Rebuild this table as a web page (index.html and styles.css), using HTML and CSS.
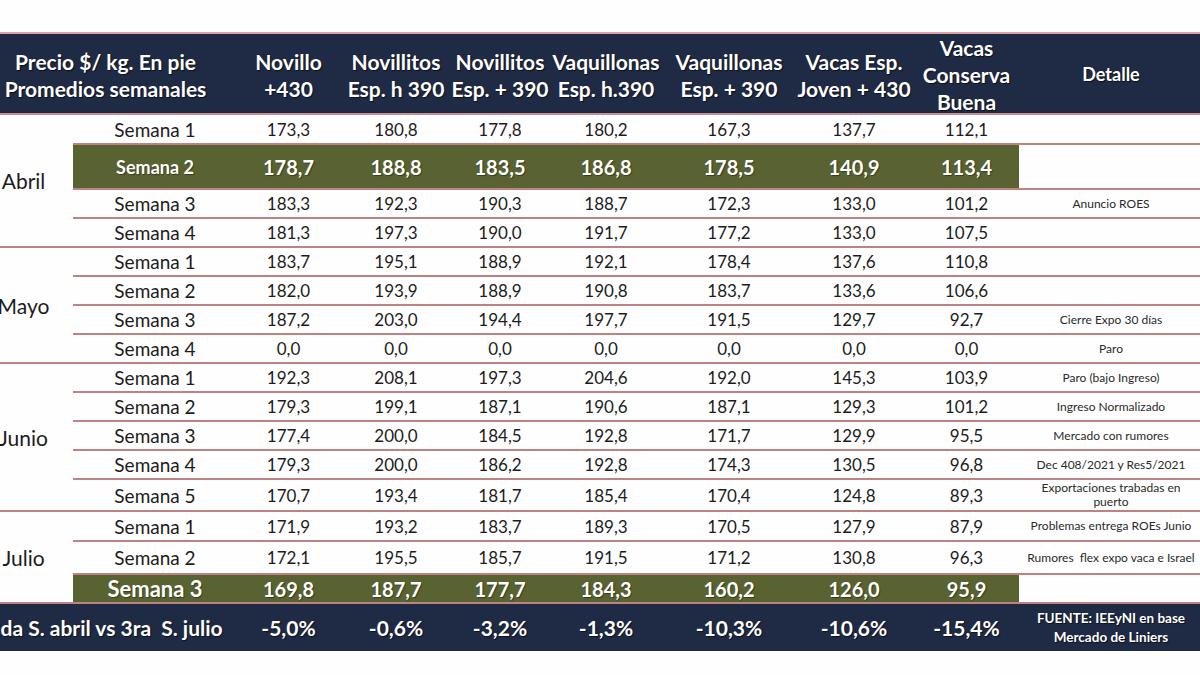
FILE: index.html
```html
<!DOCTYPE html>
<html lang="es">
<head>
<meta charset="utf-8">
<title>Precio $/kg en pie</title>
<link rel="stylesheet" href="styles.css">
</head>
<body>
<div class="sheet">
  <div class="head">
    <div class="h h-title">Precio $/ kg. En pie<br>Promedios semanales</div>
    <div class="h">Novillo<br>+430</div>
    <div class="h">Novillitos<br>Esp. h 390</div>
    <div class="h">Novillitos<br>Esp. + 390</div>
    <div class="h">Vaquillonas<br>Esp. h.390</div>
    <div class="h">Vaquillonas<br>Esp. + 390</div>
    <div class="h">Vacas Esp.<br>Joven + 430</div>
    <div class="h">Vacas<br>Conserva<br>Buena</div>
    <div class="h h-det">Detalle</div>
  </div>

  <div class="group">
    <div class="month">Abril</div>
    <div class="weeks">
      <div class="row r30"><div class="c wk">Semana 1</div><div class="c">173,3</div><div class="c">180,8</div><div class="c">177,8</div><div class="c">180,2</div><div class="c">167,3</div><div class="c">137,7</div><div class="c">112,1</div><div class="c det"></div></div>
      <div class="row hl r45"><div class="c wk">Semana 2</div><div class="c">178,7</div><div class="c">188,8</div><div class="c">183,5</div><div class="c">186,8</div><div class="c">178,5</div><div class="c">140,9</div><div class="c">113,4</div><div class="c det"></div></div>
      <div class="row r29"><div class="c wk">Semana 3</div><div class="c">183,3</div><div class="c">192,3</div><div class="c">190,3</div><div class="c">188,7</div><div class="c">172,3</div><div class="c">133,0</div><div class="c">101,2</div><div class="c det">Anuncio ROES</div></div>
      <div class="row r29"><div class="c wk">Semana 4</div><div class="c">181,3</div><div class="c">197,3</div><div class="c">190,0</div><div class="c">191,7</div><div class="c">177,2</div><div class="c">133,0</div><div class="c">107,5</div><div class="c det"></div></div>
    </div>
  </div>

  <div class="group">
    <div class="month">Mayo</div>
    <div class="weeks">
      <div class="row r29"><div class="c wk">Semana 1</div><div class="c">183,7</div><div class="c">195,1</div><div class="c">188,9</div><div class="c">192,1</div><div class="c">178,4</div><div class="c">137,6</div><div class="c">110,8</div><div class="c det"></div></div>
      <div class="row r29"><div class="c wk">Semana 2</div><div class="c">182,0</div><div class="c">193,9</div><div class="c">188,9</div><div class="c">190,8</div><div class="c">183,7</div><div class="c">133,6</div><div class="c">106,6</div><div class="c det"></div></div>
      <div class="row r29"><div class="c wk">Semana 3</div><div class="c">187,2</div><div class="c">203,0</div><div class="c">194,4</div><div class="c">197,7</div><div class="c">191,5</div><div class="c">129,7</div><div class="c">92,7</div><div class="c det">Cierre Expo 30 días</div></div>
      <div class="row r29"><div class="c wk">Semana 4</div><div class="c">0,0</div><div class="c">0,0</div><div class="c">0,0</div><div class="c">0,0</div><div class="c">0,0</div><div class="c">0,0</div><div class="c">0,0</div><div class="c det">Paro</div></div>
    </div>
  </div>

  <div class="group">
    <div class="month">Junio</div>
    <div class="weeks">
      <div class="row r29"><div class="c wk">Semana 1</div><div class="c">192,3</div><div class="c">208,1</div><div class="c">197,3</div><div class="c">204,6</div><div class="c">192,0</div><div class="c">145,3</div><div class="c">103,9</div><div class="c det">Paro (bajo Ingreso)</div></div>
      <div class="row r29"><div class="c wk">Semana 2</div><div class="c">179,3</div><div class="c">199,1</div><div class="c">187,1</div><div class="c">190,6</div><div class="c">187,1</div><div class="c">129,3</div><div class="c">101,2</div><div class="c det">Ingreso Normalizado</div></div>
      <div class="row r29"><div class="c wk">Semana 3</div><div class="c">177,4</div><div class="c">200,0</div><div class="c">184,5</div><div class="c">192,8</div><div class="c">171,7</div><div class="c">129,9</div><div class="c">95,5</div><div class="c det">Mercado con rumores</div></div>
      <div class="row r29"><div class="c wk">Semana 4</div><div class="c">179,3</div><div class="c">200,0</div><div class="c">186,2</div><div class="c">192,8</div><div class="c">174,3</div><div class="c">130,5</div><div class="c">96,8</div><div class="c det">Dec 408/2021 y Res5/2021</div></div>
      <div class="row r32"><div class="c wk">Semana 5</div><div class="c">170,7</div><div class="c">193,4</div><div class="c">181,7</div><div class="c">185,4</div><div class="c">170,4</div><div class="c">124,8</div><div class="c">89,3</div><div class="c det">Exportaciones trabadas en<br>puerto</div></div>
    </div>
  </div>

  <div class="group">
    <div class="month">Julio</div>
    <div class="weeks">
      <div class="row r30"><div class="c wk">Semana 1</div><div class="c">171,9</div><div class="c">193,2</div><div class="c">183,7</div><div class="c">189,3</div><div class="c">170,5</div><div class="c">127,9</div><div class="c">87,9</div><div class="c det">Problemas entrega ROEs Junio</div></div>
      <div class="row r33"><div class="c wk">Semana 2</div><div class="c">172,1</div><div class="c">195,5</div><div class="c">185,7</div><div class="c">191,5</div><div class="c">171,2</div><div class="c">130,8</div><div class="c">96,3</div><div class="c det">Rumores&nbsp; flex expo vaca e Israel</div></div>
      <div class="row hl hl2 r29"><div class="c wk">Semana 3</div><div class="c">169,8</div><div class="c">187,7</div><div class="c">177,7</div><div class="c">184,3</div><div class="c">160,2</div><div class="c">126,0</div><div class="c">95,9</div><div class="c det"></div></div>
    </div>
  </div>

  <div class="foot">
    <div class="f f-title">2da S. abril vs 3ra&nbsp; S. julio</div>
    <div class="f">-5,0%</div>
    <div class="f">-0,6%</div>
    <div class="f">-3,2%</div>
    <div class="f">-1,3%</div>
    <div class="f">-10,3%</div>
    <div class="f">-10,6%</div>
    <div class="f">-15,4%</div>
    <div class="f f-det">FUENTE: IEEyNI en base<br>Mercado de Liniers</div>
  </div>
</div>
</body>
</html>
```

FILE: styles.css
```css
html, body {
  margin: 0;
  padding: 0;
  background: #fefefe;
  overflow: hidden;
}
body {
  width: 1200px;
  height: 675px;
  font-family: "Lato", "Open Sans", sans-serif;
  color: #1c1c1c;
}
.sheet {
  margin-left: -26px;
  padding-top: 32px;
  width: 1229px;
}
.head, .foot {
  display: grid;
  grid-template-columns: 263px 103px 112px 96px 116px 130px 120px 105px 184px;
}
.row {
  display: grid;
  grid-template-columns: 164px 103px 112px 96px 116px 130px 120px 105px 184px;
}
.head {
  background: #1f2a44;
  border-top: 2px solid #dba3a8;
  border-bottom: 2px solid #c88e93;
  height: 79px;
  color: #fff;
  font-weight: 700;
  font-size: 21px;
  line-height: 27px;
  text-shadow: 1px 1px 1px rgba(0,0,0,0.6);
}
.h {
  display: flex;
  align-items: center;
  justify-content: center;
  text-align: center;
  white-space: nowrap;
}
.h-det {
  font-size: 18px;
}
.group {
  display: flex;
  border-bottom: 2px solid #bf8282;
}
.month {
  width: 99px;
  display: flex;
  align-items: center;
  justify-content: center;
  font-size: 21px;
}
.weeks {
  flex: 1;
}
.row {
  border-bottom: 2px solid #bf8282;
  font-size: 17px;
}
.weeks .row:last-child {
  border-bottom: none;
}
.r29 { height: 27px; }
.r30 { height: 28px; }
.r32 { height: 30px; }
.r33 { height: 31px; }
.r45 { height: 43px; }
.c {
  display: flex;
  align-items: center;
  justify-content: center;
  text-align: center;
  white-space: nowrap;
}
.c.wk {
  font-size: 19px;
}
.det {
  font-size: 12px;
  line-height: 14px;
  color: #2a2a2a;
  background: #fefefe;
}
.hl .c {
  background: #596331;
  color: #fff;
  font-weight: 700;
  font-size: 20px;
  text-shadow: 1px 1px 1px rgba(0,0,0,0.4);
}
.hl .c.wk {
  font-size: 18px;
}
.hl2 .c.wk {
  font-size: 22px;
}
.hl .c.det {
  background: #fefefe;
}
.foot {
  background: #1f2a44;
  height: 47px;
  color: #fff;
  font-weight: 700;
  font-size: 21px;
  text-shadow: 1px 1px 1px rgba(0,0,0,0.6);
}
.f {
  display: flex;
  align-items: center;
  justify-content: center;
  white-space: nowrap;
}
.f-det {
  font-size: 13.5px;
  line-height: 19px;
  text-align: center;
}
```
